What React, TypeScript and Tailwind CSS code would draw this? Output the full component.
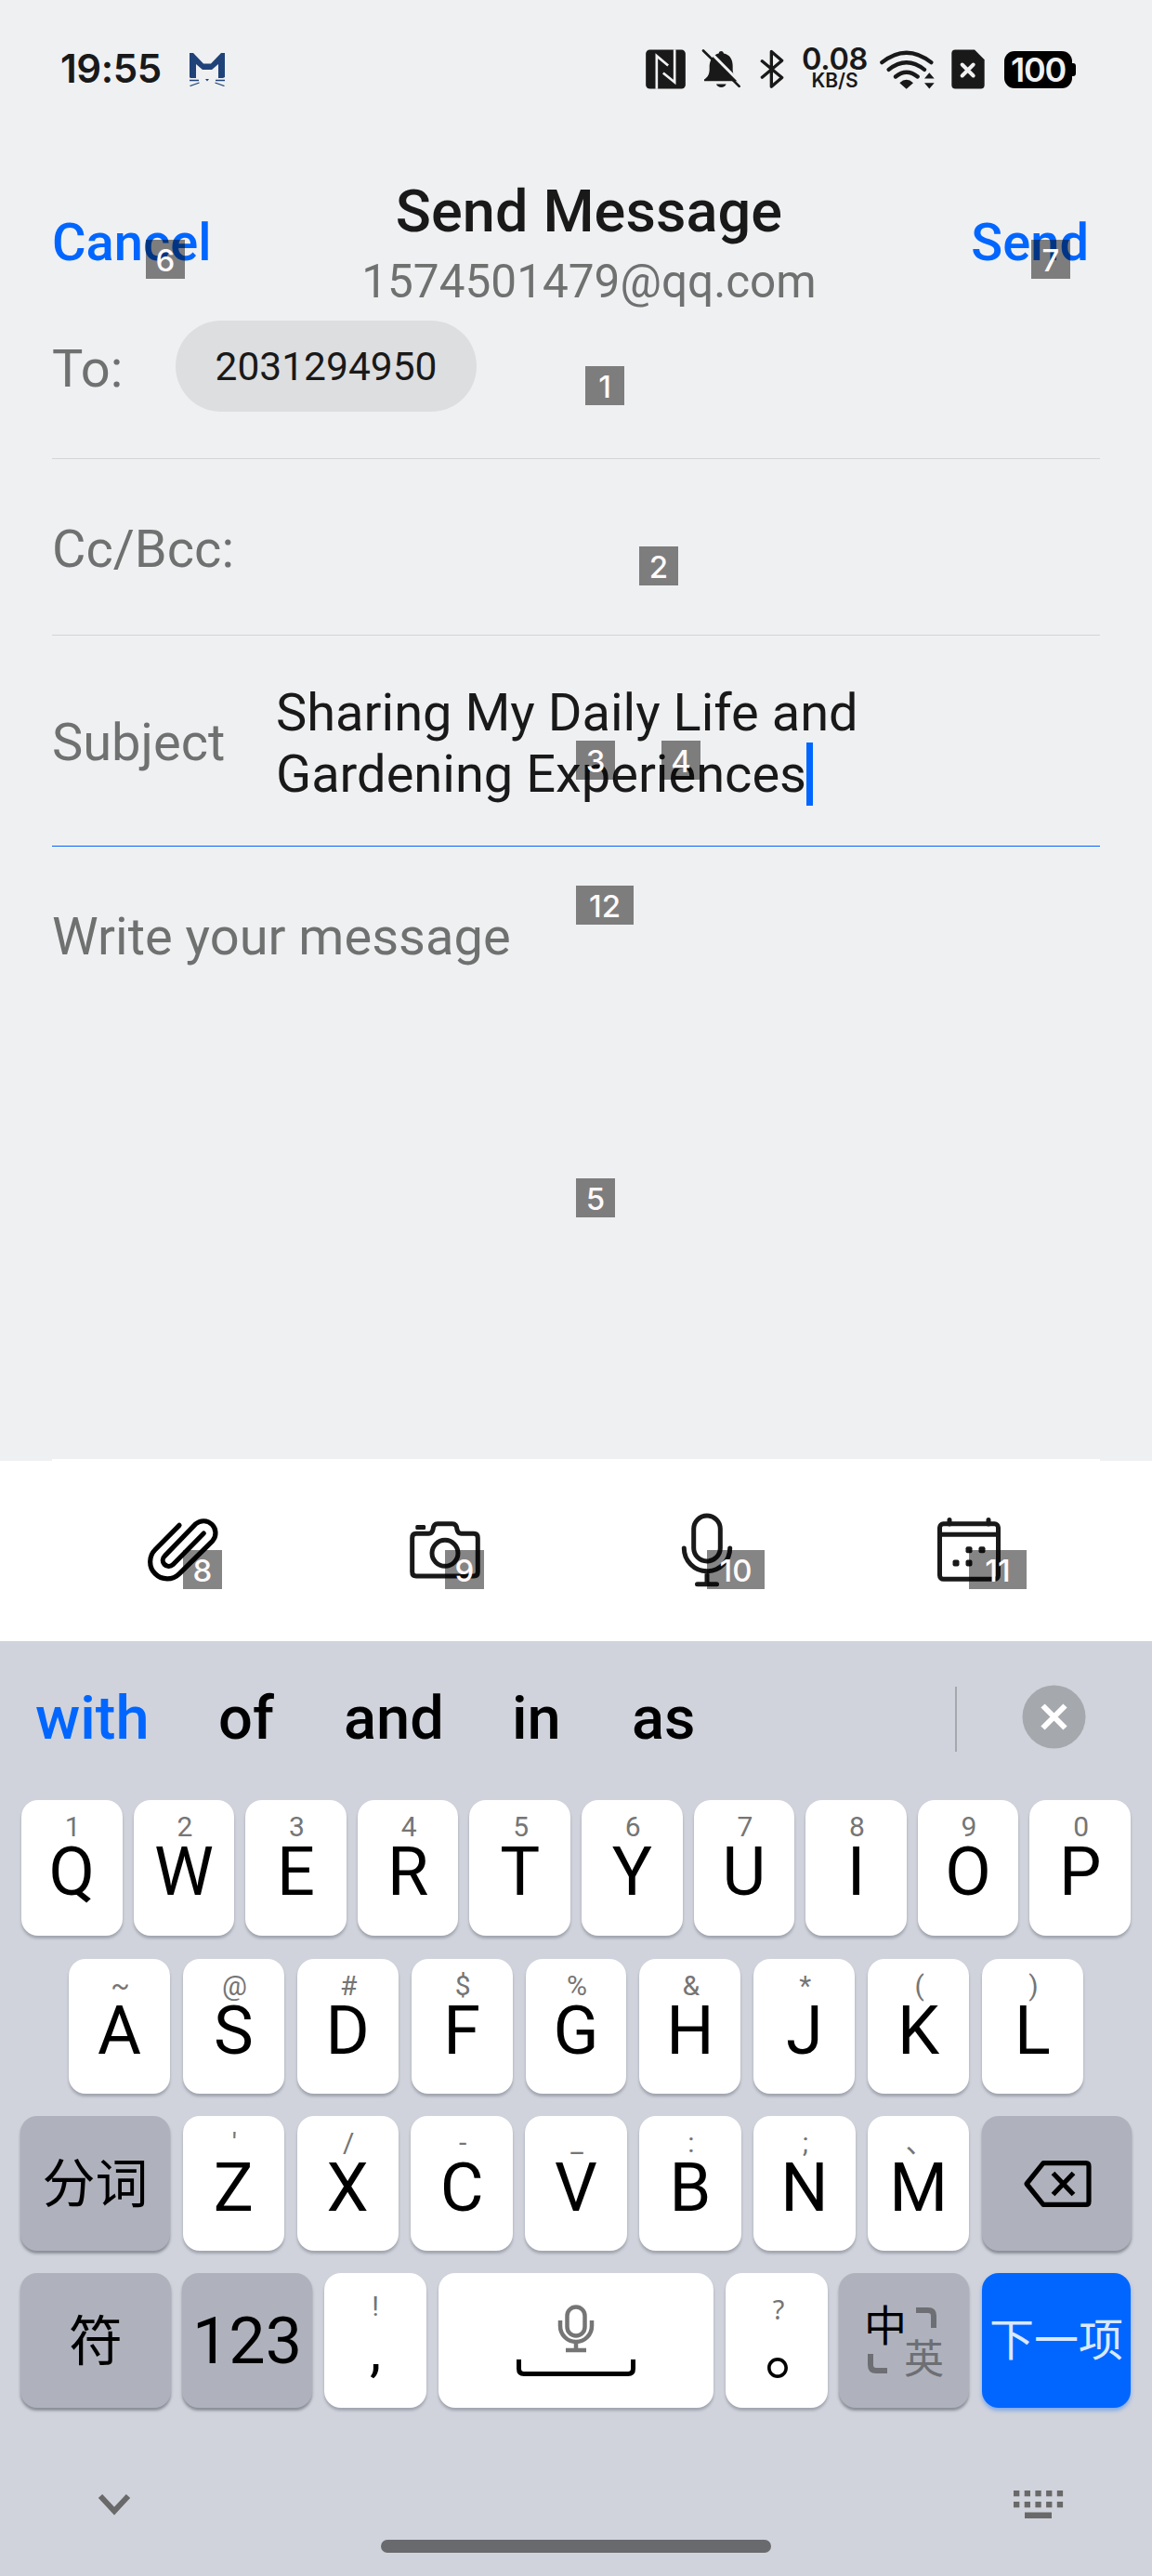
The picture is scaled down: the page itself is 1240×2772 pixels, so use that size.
import React from "react";

const INK = "#191919";

function StatusBar() {
  return (
    <div className="flex h-[147px] items-center pl-[65px] pr-[82px]">
      <span className="font-['Inter',sans-serif] text-[42px] leading-none font-semibold tracking-[-0.4px] text-[#191919]">19:55</span>
      <svg className="ml-[30px] mt-[3px]" width="38" height="36" viewBox="0 0 38 36">
        <path fill="#1f4379" d="M0 0H4L15 11.5H23L34 0H38V26L36 27H31V12L24 18H14L7 12V27H1L0 26Z" />
        <path stroke="#1f4379" strokeWidth="1.3" d="M0 29.5H10M28 29.5H38M0.5 35.500L10.500 32M37.500 35.500L27.500 32" />
        <path fill="#1f4379" d="M17 28H21L19 30.500Z" />
      </svg>
      <div className="ml-auto flex items-center">
        <svg width="43" height="50" viewBox="42 25.500 128 150">
          <rect x="42" y="39" width="128" height="126" rx="13" fill={INK} />
          <path d="M77 166V59L114 90M135 38V144L98 114" fill="none" stroke="#eff0f2" strokeWidth="8" />
        </svg>
        <svg className="ml-[17px]" width="43" height="50" viewBox="221 25.500 129 150">
          <path fill={INK} d="M230 140V135C243 126 246 118 247 104V90C249 68 262 54 277 51C278 41 291 41 293 51C310 54 322 68 322 90V104C323 118 327 126 340 135V140Z" />
          <path fill={INK} d="M269 150H301C297 164 273 164 269 150Z" />
          <path d="M235 32L354 152" stroke="#eff0f2" strokeWidth="9" />
          <path d="M227 42L343 157" stroke={INK} strokeWidth="8" strokeLinecap="round" />
        </svg>
        <svg className="ml-[20px]" width="27" height="50" viewBox="411 25.500 81 150">
          <path d="M418 76L482 129L448 158V45L482 74L418 128" fill="none" stroke={INK} strokeWidth="10" strokeLinejoin="round" strokeLinecap="round" />
        </svg>
        <div className="ml-[18px] mt-[2px] flex w-[71px] flex-col items-center font-['Inter',sans-serif] font-semibold text-[#191919]">
          <span className="text-[32.500px] leading-[24px] tracking-[-0.3px]">0.08</span>
          <span className="text-[21px] leading-[22px]">KB/S</span>
        </div>
        <svg className="ml-[13px]" width="60" height="50" viewBox="797 25.500 180 150">
          <path d="M804 80Q883 17 963 80M826 103Q883 57 941 103M848 126Q883 97 919 126" fill="none" stroke={INK} strokeWidth="13" strokeLinecap="round" />
          <path fill={INK} d="M861 146Q883 126 905 146L883 166ZM941 132L957 113L973 132ZM941 146H973L957 165Z" />
        </svg>
        <svg className="ml-[17px]" width="36" height="50" viewBox="1029 25.500 108 150">
          <path fill={INK} d="M1042 39H1104L1136 71V153Q1136 165 1124 165H1042Q1030 165 1030 153V51Q1030 39 1042 39Z" />
          <path d="M1064 87L1100 123M1100 87L1064 123" stroke="#eff0f2" strokeWidth="12" strokeLinecap="round" />
        </svg>
        <div className="ml-[21px] mt-[2px] flex items-center">
          <div className="flex h-[40px] w-[73px] items-center justify-center rounded-[11px] bg-black">
            <span className="font-['Inter',sans-serif] text-[36px] leading-none font-semibold tracking-[-1.200px] text-[#eff0f2]">100</span>
          </div>
          <div className="h-[14px] w-[4px] rounded-r-[3px] bg-black" />
        </div>
      </div>
    </div>
  );
}

function Header() {
  return (
    <div className="flex h-[198px] justify-between pl-[56px] pr-[68px] text-[#0066ff]">
      <span className="w-[180px] pt-[80px] text-[56px] leading-[68px] font-medium">Cancel</span>
      <div className="flex flex-col items-center pt-[41px]">
        <span className="text-[63px] leading-[80px] font-medium tracking-[0.1px] text-[#191919]">Send Message</span>
        <span className="mt-[6px] text-[49.500px] leading-[58px] text-[#6f7170]">1574501479@qq.com</span>
      </div>
      <span className="w-[140px] pt-[80px] text-right text-[56px] leading-[68px] font-medium">Send</span>
    </div>
  );
}

function Compose() {
  return (
    <div className="flex flex-1 flex-col px-[56px] text-[56px] leading-[66px] text-[#6f7170]">
      <div className="flex h-[149px] shrink-0 items-start border-b border-[#d2d4d6]">
        <span className="w-[133px] pt-[19px]">To:</span>
        <span className="flex h-[98px] w-[324px] items-center justify-center rounded-full bg-[#dddee0] pt-[2px] text-[42.500px] text-[#191919]">
          2031294950
        </span>
      </div>
      <div className="h-[190px] shrink-0 border-b border-[#d2d4d6] pt-[64px]">Cc/Bcc:</div>
      <div className="flex h-[227px] shrink-0 items-center border-b border-[#0066ff]">
        <span className="w-[241px] pt-[3px]">Subject</span>
        <span className="flex flex-col pt-[5px] text-[#191919]">
          <span>Sharing My Daily Life and</span>
          <span className="flex h-[66px] items-center">
            Gardening Experiences
            <span className="h-[68px] w-[7px] bg-[#0066ff]" />
          </span>
        </span>
      </div>
      <div className="pt-[64px]">Write your message</div>
      <div className="mt-auto h-[2px] bg-white" />
    </div>
  );
}

function Toolbar() {
  return (
    <div className="h-[194px] bg-white pl-[156px] pt-[52px]">
      <div className="flex">
        <svg width="84" height="96" viewBox="0 -6 84 96" fill="none" stroke="#000" strokeWidth="5.200" strokeLinecap="round">
          <path d="M37 11.300L11.100 37.500A18.300 18.300 0 0 0 36.900 63.600L72.800 28.100A12.900 12.900 0 0 0 54.600 9.900L21.300 44.300A6.200 6.200 0 0 0 30.100 53.700L63.300 20" />
        </svg>
        <svg className="ml-[196px]" width="86" height="96" viewBox="0 -6 86 96" fill="none" stroke={INK} strokeWidth="5">
          <path d="M12 20.300H25.500Q29 20.300 30 16Q30.500 9.700 35 9.700H51Q55.500 9.700 56 16Q57 20.300 60.500 20.300H74Q78.300 20.300 78.300 25V61.500Q78.300 66 74 66H12Q7.700 66 7.700 61.500V25Q7.700 20.300 12 20.300Z" />
          <circle cx="43" cy="41.300" r="14" />
          <rect x="11.300" y="11" width="10.800" height="5" rx="1.500" fill={INK} stroke="none" />
        </svg>
        <svg className="ml-[208px]" width="62" height="96" viewBox="0 0 62 96" fill="none" stroke={INK} strokeWidth="5" strokeLinecap="round">
          <rect x="16.700" y="7" width="28.600" height="49" rx="14.300" />
          <path d="M6.300 42A24.700 24.700 0 0 0 55.700 42M31 66.700V80.700M20.500 80.700H41.500" />
        </svg>
        <svg className="ml-[212px]" width="80" height="96" viewBox="0 -2 80 96" fill="none" stroke={INK} strokeWidth="5">
          <rect x="7.500" y="13.800" width="63" height="59.500" rx="4" />
          <path d="M7.500 25.300H70.500" />
          <path d="M18 9.500V14M60 9.500V14" strokeLinecap="round" />
          <g fill={INK} stroke="none">
            <rect x="35.500" y="38.300" width="7" height="7" rx="2" />
            <rect x="49.500" y="38.300" width="7" height="7" rx="2" />
            <rect x="21.500" y="52.500" width="7" height="7" rx="2" />
            <rect x="35.500" y="52.500" width="7" height="7" rx="2" />
          </g>
        </svg>
      </div>
    </div>
  );
}

const KEY = "flex flex-col items-center rounded-[18px] bg-white text-black shadow-[0_3px_3px_rgba(90,95,110,0.4)]";
const DARK = "flex items-center justify-center rounded-[18px] bg-[#afb2bc] text-black shadow-[0_3px_3px_rgba(80,85,95,0.55)]";

function Letter({ hint, label }: { hint: string; label: string }) {
  return (
    <div className={`${KEY} h-full min-w-0 flex-1 pt-[11px]`}>
      <span className="pl-[2px] font-['Roboto','Noto_Sans_CJK_SC',sans-serif] text-[30px] leading-[36px] whitespace-pre text-[#757575]">{hint}</span>
      <span className="text-[72px] leading-[62px]">{label}</span>
    </div>
  );
}

const row1 = ["1Q", "2W", "3E", "4R", "5T", "6Y", "7U", "8I", "9O", "0P"];
const row2 = ["~A", "@S", "#D", "$F", "%G", "&H", "*J", "(K", ")L"];
const row3 = ["'Z", "/X", "-C", "_V", ":B", ";N", "、M"];

function Keys({ keys }: { keys: string[] }) {
  return (
    <>
      {keys.map((k) => (
        <Letter key={k} hint={k[0]} label={k[1]} />
      ))}
    </>
  );
}

const CJK = "font-['Noto_Sans_CJK_SC',sans-serif]";

function Keyboard() {
  return (
    <div className="flex h-[1006px] flex-col bg-[#d0d3db]">
      <div className="flex h-[171px] shrink-0 items-center pl-[38px] pr-[71px] text-[65px] leading-[80px] font-medium text-black">
        <span className="mt-[-5px] w-[197px] text-[#0066ff]">with</span>
        <span className="mt-[-5px] w-[135px]">of</span>
        <span className="mt-[-5px] w-[181px]">and</span>
        <span className="mt-[-5px] w-[129px]">in</span>
        <span className="mt-[-5px]">as</span>
        <div className="mt-[-3px] ml-auto h-[70px] w-[2px] bg-[#a5a8ad]" />
        <svg className="mt-[-8px] ml-[70px]" width="69" height="69" viewBox="0 0 69 69">
          <circle cx="34.500" cy="34.500" r="34" fill="#a5a8ad" />
          <path d="M22.500 22.500L46.500 46.500M46.500 22.500L22.500 46.500" stroke="#fff" strokeWidth="6" />
        </svg>
      </div>
      <div className="flex h-[146px] shrink-0 gap-[12px] px-[23px]">
        <Keys keys={row1} />
      </div>
      <div className="mt-[25px] flex h-[145px] shrink-0 gap-[13.900px] px-[74px]">
        <Keys keys={row2} />
      </div>
      <div className="mt-[24px] flex h-[145px] shrink-0 gap-[13.600px] px-[22px]">
        <div className={`${DARK} w-[161px] pb-[9px]`}>
          <span className={`${CJK} text-[57px] leading-none`}>分词</span>
        </div>
        <Keys keys={row3} />
        <div className={`${DARK} w-[161px]`}>
          <svg width="74" height="52" viewBox="0 0 74 52" fill="none" stroke="#000" strokeWidth="5.200" strokeLinejoin="round">
            <path d="M22 3.600H68Q71 3.600 71 7V45Q71 48.400 68 48.400H22L4 26Z" />
            <path d="M32.500 14.500L54.500 37.500M54.500 14.500L32.500 37.500" />
          </svg>
        </div>
      </div>
      <div className="mt-[24px] flex h-[145px] shrink-0 pl-[22px]">
        <div className={`${DARK} w-[162px] pb-[8px]`}>
          <span className={`${CJK} text-[58px] leading-none`}>符</span>
        </div>
        <div className={`${DARK} ml-[12px] w-[140px] items-start pt-[37px]`}>
          <span className="text-[70px] leading-[72px]">123</span>
        </div>
        <div className={`${KEY} ml-[13px] w-[110px] pt-[18px]`}>
          <span className="text-[30px] leading-[36px] text-[#757575]">!</span>
          <span className="text-[62px] leading-[60px]">,</span>
        </div>
        <div className={`${KEY} ml-[13px] w-[296px] pt-[34px]`}>
          <svg width="40" height="52" viewBox="0 0 40 52" fill="none" stroke="#757575" strokeWidth="4.500">
            <rect x="10.500" y="2.500" width="19" height="31" rx="9.500" />
            <path d="M3 17V23A17 17 0 0 0 37 23V17M20 40V49M9 49H31" />
          </svg>
          <svg className="mt-[6px]" width="130" height="20" viewBox="0 0 130 20" fill="none" stroke="#000" strokeWidth="5">
            <path d="M3.500 1V11Q3.500 16.500 9 16.500H121Q126.500 16.500 126.500 11V1" />
          </svg>
        </div>
        <div className={`${KEY} ml-[13px] w-[110px] pt-[21px]`}>
          <span className="pl-[4px] font-['Noto_Sans',sans-serif] text-[29px] leading-[36px] text-[#757575]">?</span>
          <span className={`${CJK} mt-[-10px] w-[72px] pl-[23px] text-[72px] leading-[60px]`}>。</span>
        </div>
        <div className={`${DARK} ml-[12px] w-[140px]`}>
          <div className="grid w-[84px] grid-cols-2 grid-rows-2">
            <span className={`${CJK} mt-[-2px] ml-[-1px] text-[46px] leading-[40px]`}>中</span>
            <svg className="mt-[1px] ml-[12px]" width="24" height="24" viewBox="0 0 24 24">
              <path d="M1 4H14Q20 4 20 10V23" fill="none" stroke="#6d6f74" strokeWidth="6" />
            </svg>
            <svg className="mt-[13px] ml-[2px]" width="24" height="24" viewBox="0 0 24 24">
              <path d="M4 1V13Q4 19 10 19H22" fill="none" stroke="#6d6f74" strokeWidth="6" />
            </svg>
            <span className={`${CJK} mt-[-4px] text-[43px] leading-[40px] text-[#6d6f74]`}>英</span>
          </div>
        </div>
        <div className="ml-[14px] flex w-[160px] items-center justify-center rounded-[18px] bg-[#0066ff] pb-[9px] shadow-[0_3px_4px_rgba(0,102,255,0.4)]">
          <span className={`${CJK} text-[48px] leading-none text-[#d9e8ff]`}>下一项</span>
        </div>
      </div>
      <div className="mt-[89px] flex h-[30px] shrink-0 items-center justify-between pl-[104px] pr-[94px]">
        <svg width="38" height="26" viewBox="0 0 38 26">
          <path d="M4 4L19 20L34 4" fill="none" stroke="#696969" strokeWidth="6" />
        </svg>
        <svg width="56" height="30" viewBox="0 0 56 30" fill="#696969">
          {[0, 1, 2, 3, 4].map((i) => (
            <g key={i}>
              <rect x={1 + i * 11.7} y="0" width="6.300" height="6.300" />
              <rect x={1 + i * 11.7} y="12" width="6.300" height="6.300" />
            </g>
          ))}
          <rect x="13" y="23.500" width="29" height="6.500" />
        </svg>
      </div>
      <div className="mx-auto mt-[23px] h-[14px] w-[420px] shrink-0 rounded-[7px] bg-[#696a6e]" />
    </div>
  );
}

const Tag = ({ n, at }: { n: number; at: string }) => (
  <div className={`absolute flex h-[42px] items-center justify-center bg-black/48 pt-[2px] font-['Inter',sans-serif] text-[33px] leading-none font-medium text-[#fffafa] ${at}`}>
    {n}
  </div>
);

export default function App() {
  return (
    <div className="relative flex h-[2772px] w-[1240px] flex-col overflow-hidden bg-[#eff0f2] font-['Roboto',sans-serif]">
      <StatusBar />
      <Header />
      <Compose />
      <Toolbar />
      <Keyboard />
      <Tag n={1} at="left-[630px] top-[394px] w-[42px]" />
      <Tag n={2} at="left-[688px] top-[588px] w-[42px]" />
      <Tag n={3} at="left-[620px] top-[797px] w-[42px]" />
      <Tag n={4} at="left-[712px] top-[797px] w-[42px]" />
      <Tag n={5} at="left-[620px] top-[1268px] w-[42px]" />
      <Tag n={6} at="left-[157px] top-[258px] w-[42px]" />
      <Tag n={7} at="left-[1110px] top-[258px] w-[42px]" />
      <Tag n={8} at="left-[197px] top-[1668px] w-[42px]" />
      <Tag n={9} at="left-[479px] top-[1668px] w-[42px]" />
      <Tag n={10} at="left-[761px] top-[1668px] w-[62px]" />
      <Tag n={11} at="left-[1043px] top-[1668px] w-[62px]" />
      <Tag n={12} at="left-[620px] top-[953px] w-[62px]" />
    </div>
  );
}
